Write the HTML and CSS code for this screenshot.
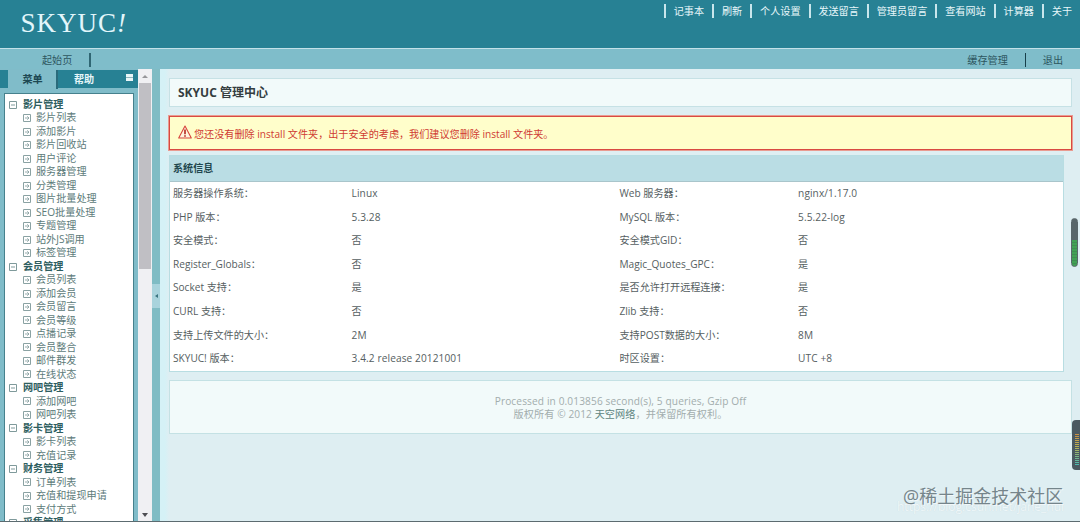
FILE: index.html
```
<!DOCTYPE html>
<html lang="zh-CN">
<head>
<meta charset="utf-8">
<title>SKYUC 管理中心</title>
<link rel="stylesheet" href="styles.css">
</head>
<body>
<svg width="0" height="0" class="defs">
  <symbol id="minus" viewBox="0 0 8 8"><path d="M.5.5h7v7h-7zM2 4h4" fill="none" stroke="#7f9a9b"/></symbol>
  <symbol id="leaf" viewBox="0 0 8 8"><path d="M.5.5h7v7h-7z" fill="none" stroke="#8aa2a3"/><path d="M2 4h4M4.300 2.300L6 4 4.300 5.700" fill="none" stroke="#8aa2a3" stroke-width=".9"/></symbol>
</svg>
<header class="top">
  <div class="logo">SKYUC<i>!</i></div>
  <nav class="links"><a>记事本</a><a>刷新</a><a>个人设置</a><a>发送留言</a><a>管理员留言</a><a>查看网站</a><a>计算器</a><a>关于</a></nav>
</header>
<div class="bar"><a class="start">起始页</a><span class="bar-right"><a class="cache">缓存管理</a><a class="exit">退出</a></span></div>
<div class="frames">
  <aside class="side">
    <div class="tabs"><b class="tab on">菜单</b><b class="tab">帮助</b><span class="fold"></span></div>
    <div class="tree" id="tree"></div>
  </aside>
  <div class="scroll"><span class="up"></span><span class="thumb"></span><span class="down"></span></div>
  <div class="divider"><span class="handle"><i></i></span></div>
  <main class="main">
    <h1 class="title">SKYUC 管理中心</h1>
    <div class="alert"><svg class="warn" viewBox="0 0 14 14"><path d="M7 1 13.300 13H.7z" fill="#fff5df" stroke="#d8453c" stroke-width="1.100" stroke-linejoin="round"/><path d="M7 4.500v4.800M7 10.300v1.500" stroke="#b3261f" stroke-width="1.600"/></svg><span>您还没有删除 install 文件夹，出于安全的考虑，我们建议您删除 install 文件夹。</span></div>
    <section class="panel">
      <h2>系统信息</h2>
      <div class="grid">
        <span>服务器操作系统：</span><span>Linux</span><span>Web 服务器：</span><span>nginx/1.17.0</span>
        <span>PHP 版本：</span><span>5.3.28</span><span>MySQL 版本：</span><span>5.5.22-log</span>
        <span>安全模式：</span><span>否</span><span>安全模式GID：</span><span>否</span>
        <span>Register_Globals：</span><span>否</span><span>Magic_Quotes_GPC：</span><span>是</span>
        <span>Socket 支持：</span><span>是</span><span>是否允许打开远程连接：</span><span>是</span>
        <span>CURL 支持：</span><span>否</span><span>Zlib 支持：</span><span>否</span>
        <span>支持上传文件的大小：</span><span>2M</span><span>支持POST数据的大小：</span><span>8M</span>
        <span>SKYUC! 版本：</span><span>3.4.2 release 20121001</span><span>时区设置：</span><span>UTC +8</span>
      </div>
    </section>
    <footer class="foot"><div class="stats">Processed in 0.013856 second(s), 5 queries, Gzip Off</div><div class="copy">版权所有 © 2012 <a>天空网络</a>，并保留所有权利。</div></footer>
  </main>
</div>
<div class="gauge"></div>
<div class="meter"><i></i></div>
<div class="mark-url">https://blog.csdn.net/jane_hui</div>
<div class="mark">@稀土掘金技术社区</div>
<div class="edge"></div>
<script src="tree.js"></script>
</body>
</html>
```
FILE: styles.css
```
* { box-sizing: border-box; }
body {
  margin: 0; width: 1080px; height: 522px; overflow: hidden;
  display: flex; flex-direction: column; position: relative;
  font: 10.12px/13.5px "Open Sans", "Noto Sans CJK SC", sans-serif;
  color: #555e61; background: #deeef2;
}
h1, h2 { margin: 0; }
.defs { position: absolute; }
.top { height: 48.5px; flex: none; display: flex; justify-content: space-between; background: #278194; border-bottom: 1.5px solid #c3e1e8; }
.logo { width: 135px; height: 48px; padding: 7px 0 0 20.5px; background: #278194; color: #e2f6fb; font: 27px/32px "Liberation Serif", serif; letter-spacing: 1px; white-space: nowrap; }
.links { display: flex; padding: 4px 0 0; height: 19px; color: #e7f7fa; }
.links a { border-left: 2px solid #c9e6ec; padding: 0 8px 0 7.900px; line-height: 14px; height: 14px; white-space: nowrap; }
.links a:last-child { padding-right: 8px; }
.bar { height: 20.5px; flex: none; background: #7fbdca; display: flex; justify-content: space-between; align-items: flex-start; padding-top: 4px; color: #2d565f; }
.bar a { line-height: 14px; height: 14px; }
.start { padding: 0 17px 0 42px; border-right: 2px solid #2f6673; }
.bar-right { display: flex; }
.cache { padding-right: 17px; border-right: 1px solid #173f4a; }
.exit { padding: 0 17px; }
.frames { flex: 1; min-height: 0; display: flex; }
.side { width: 138px; background: #80bcc9; padding-top: 1px; display: flex; flex-direction: column; }
.tabs { height: 18px; flex: none; display: flex; background: #278194; padding-left: 8px; }
.tab { color: #e6f6f9; width: 52px; text-align: center; line-height: 19px; }
.tab.on { background: #80bcc9; color: #1d4852; width: 50px; height: 19px; padding-left: 1px; border-right: 2px solid #2a6b7b; }
.fold { margin: 4px 5px 0 auto; width: 7px; height: 7px; background: linear-gradient(#e8f6f8 3px, #8eb5bd 3px 4px, #e8f6f8 4px); }
.tree { margin: 5px 4px 0; flex: 1; overflow: hidden; background: #fff; border: 1px solid #46818d; border-bottom: 0; padding: 4px 0 0 4px; }
.node { display: flex; align-items: center; height: 13.49px; white-space: nowrap; color: #5d7b7a; }
.node svg { width: 8px; height: 8px; flex: none; }
.node.group { font-weight: 700; color: #2e5e60; }
.node.group svg { margin-right: 6px; }
.node.item { padding-left: 14px; }
.node.item svg { margin-right: 5px; }
.scroll { width: 14px; background: #f0f0f3; display: flex; flex-direction: column; align-items: center; }
.up { border: 3px solid transparent; border-top: 0; border-bottom: 3px solid #96969a; margin-top: 6px; }
.thumb { width: 12px; height: 186px; margin-top: 5px; background: #c0bfc4; }
.down { margin: auto 0 5px; border: 3px solid transparent; border-bottom: 0; border-top: 4px solid #4d4d52; }
.divider { width: 8px; background: #80bcc4; display: flex; align-items: center; }
.handle { width: 8px; height: 24px; background: #a9d3dc; display: flex; align-items: center; justify-content: center; }
.handle i { border: 2px solid transparent; border-left: 0; border-right: 3px solid #3b7480; }
.main { flex: 1; padding: 9px 8px 0 9px; background: linear-gradient(90deg, #d5f1f6 5px, #deeef2 9px); }
.title { height: 29px; border: 1px solid #c6e1e5; background: #f2fafa; padding-left: 8px; font-size: 12px; line-height: 27px; color: #343d3f; }
.alert { height: 34px; margin: 9px 0 0; border: 1px solid #d94a42; box-shadow: 0 0 0 1px #e99b91; background: #fffecb; color: #cf3a32; display: flex; padding: 8px 0 0 8px; }
.warn { width: 14px; height: 14px; margin-right: 2px; }
.alert span { line-height: 19px; }
.panel { width: 895px; height: 217px; margin-top: 5px; background: #fff; border: 1px solid #b8dde2; }
.panel h2 { height: 26px; background: #badde4; border-bottom: 1px solid #a9c5cb; padding-left: 3px; font-size: 10.12px; line-height: 25px; color: #1f474e; }
.grid { display: grid; grid-template-columns: 20% 30% 20% 30%; grid-auto-rows: 23.6px; line-height: 23px; }
.grid span { padding-left: 3px; white-space: nowrap; }
.grid span:nth-child(even) { letter-spacing: .1px; }
.foot { height: 54px; margin-top: 8px; background: #f2fafa; border: 1px solid #c4e1e4; text-align: center; color: #a2adad; padding-top: 14px; line-height: 13px; }
.stats { letter-spacing: .13px; }
.copy { letter-spacing: .1px; }
.foot a { color: #5f8581; }
.gauge { position: absolute; left: 1071px; top: 218px; width: 7px; height: 49px; border-radius: 4px; border: 1px solid #59666a; background: repeating-linear-gradient(transparent 0 2px, #3b704a66 2px 3px) 0 21px no-repeat, linear-gradient(#59666a 21px, #41a054 21px); }
.meter { position: absolute; left: 1072px; top: 420px; width: 8px; height: 50px; border-radius: 4px 0 0 4px; background: #4b5961; }
.meter i { position: absolute; left: 3px; top: 14px; width: 4px; height: 31px; background: repeating-linear-gradient(transparent 0 1px, #4b5961 1px 2px), linear-gradient(#c98f45, #b9b153 40%, #49b9b0); }
.mark-url { position: absolute; left: 897px; top: 499px; font-size: 12px; line-height: 16px; color: #eef7f9; text-shadow: 0 0 1px #c8d6da; white-space: nowrap; }
.mark { position: absolute; left: 903px; top: 484px; font-size: 18px; line-height: 24px; color: #75858b; text-shadow: 1px 1px 0 #f1f8fa; white-space: nowrap; }
.edge { position: absolute; left: 0; bottom: 0; width: 1080px; height: 1px; background: #5c6b70; }
```
FILE: tree.js
```
const groups = [
  ["影片管理", "影片列表", "添加影片", "影片回收站", "用户评论", "服务器管理", "分类管理", "图片批量处理", "SEO批量处理", "专题管理", "站外JS调用", "标签管理"],
  ["会员管理", "会员列表", "添加会员", "会员留言", "会员等级", "点播记录", "会员整合", "邮件群发", "在线状态"],
  ["网吧管理", "添加网吧", "网吧列表"],
  ["影卡管理", "影卡列表", "充值记录"],
  ["财务管理", "订单列表", "充值和提现申请", "支付方式"],
  ["采集管理"]
];
document.getElementById("tree").innerHTML = groups.map(group =>
  group.map((name, i) =>
    `<div class="node ${i ? "item" : "group"}"><svg><use href="#${i ? "leaf" : "minus"}"/></svg>${name}</div>`
  ).join("")
).join("");
```
